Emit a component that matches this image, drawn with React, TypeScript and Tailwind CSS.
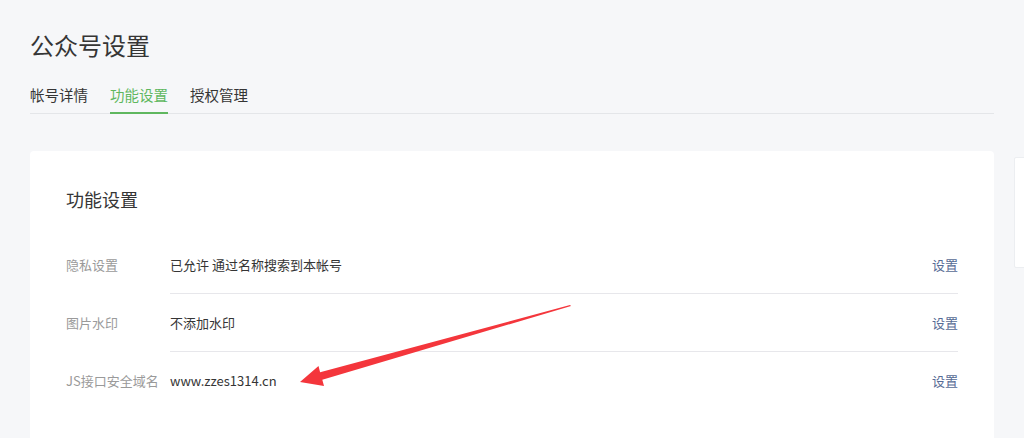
const rows = [
  { label: "隐私设置", value: "已允许 通过名称搜索到本帐号" },
  { label: "图片水印", value: "不添加水印" },
  { label: "JS接口安全域名", value: "www.zzes1314.cn" },
];

const tabs = [
  { name: "帐号详情", active: false },
  { name: "功能设置", active: true },
  { name: "授权管理", active: false },
];

const App = () => {
  return (
    <div
      className="relative min-h-screen overflow-hidden bg-[#f6f7f9]"
      style={{ fontFamily: '"Noto Sans CJK SC", "Noto Sans", sans-serif' }}
    >
      <div className="px-[30px] pt-[30px]">
        {/* TITLE */}
        <h1 className="text-[24px] leading-[30px] text-[#353535]">公众号设置</h1>

        {/* TABS */}
        <div className="mt-[24px] flex gap-[22px] border-b border-[#e4e6e9]">
          {tabs.map((tab) => (
            <div
              key={tab.name}
              className={
                tab.active
                  ? "-mb-px border-b-2 border-[#5fb75f] pb-[6px] text-[14.5px] leading-[22px] text-[#5fb75f]"
                  : "-mb-px border-b-2 border-transparent pb-[6px] text-[14.5px] leading-[22px] text-[#353535]"
              }
            >
              {tab.name}
            </div>
          ))}
        </div>

        {/* CARD + SIDE PANEL */}
        <div className="mt-[37px] flex gap-[20px]">
          <div className="w-[964px] shrink-0 rounded-[4px] bg-white px-[36px] pb-[40px] pt-[36px]">
            <h2 className="text-[18px] leading-[24px] text-[#353535]">功能设置</h2>

            <div className="mt-[25px]">
              {rows.map((row, i) => (
                <div key={row.label} className="flex h-[58px] items-stretch text-[13px]">
                  <div className="flex w-[104px] items-center text-[#9a9a9a]">{row.label}</div>
                  <div
                    className={
                      i < rows.length - 1
                        ? "flex flex-1 items-center justify-between border-b border-[#e7e7eb]"
                        : "flex flex-1 items-center justify-between"
                    }
                  >
                    <span className="text-[#353535]">{row.value}</span>
                    <span className="text-[#576b95]">设置</span>
                  </div>
                </div>
              ))}
            </div>
          </div>

          <div className="mt-[6px] h-[111px] w-[200px] shrink-0 rounded-[2px] border border-[#eceef1] bg-white" />
        </div>
      </div>

      {/* ANNOTATION ARROW */}
      <svg className="pointer-events-none absolute left-0 top-0" width="1024" height="438">
        <polygon
          points="570,305 571,306 322.3,379.8 324,386 300,382 318.5,366 320.1,372.2"
          fill="#f4363c"
        />
      </svg>
    </div>
  );
};

export default App;
